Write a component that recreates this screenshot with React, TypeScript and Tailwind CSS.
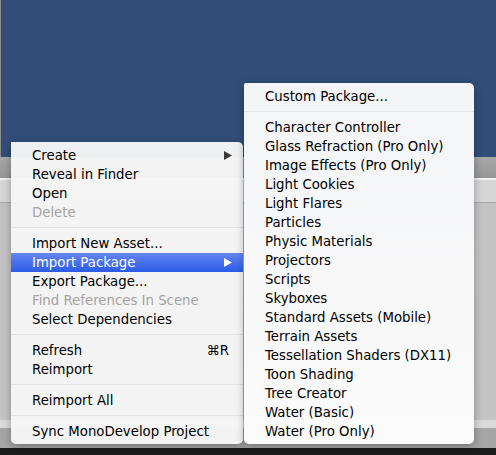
import React from 'react';

type Item = { label: string; disabled?: boolean; arrow?: boolean; shortcut?: string; active?: boolean } | 'sep';

const mainItems: Item[] = [
  { label: 'Create', arrow: true },
  { label: 'Reveal in Finder' },
  { label: 'Open' },
  { label: 'Delete', disabled: true },
  'sep',
  { label: 'Import New Asset...' },
  { label: 'Import Package', arrow: true, active: true },
  { label: 'Export Package...' },
  { label: 'Find References In Scene', disabled: true },
  { label: 'Select Dependencies' },
  'sep',
  { label: 'Refresh', shortcut: '⌘R' },
  { label: 'Reimport' },
  'sep',
  { label: 'Reimport All' },
  'sep',
  { label: 'Sync MonoDevelop Project' },
];

const packageItems: Item[] = [
  { label: 'Custom Package...' },
  'sep',
  { label: 'Character Controller' },
  { label: 'Glass Refraction (Pro Only)' },
  { label: 'Image Effects (Pro Only)' },
  { label: 'Light Cookies' },
  { label: 'Light Flares' },
  { label: 'Particles' },
  { label: 'Physic Materials' },
  { label: 'Projectors' },
  { label: 'Scripts' },
  { label: 'Skyboxes' },
  { label: 'Standard Assets (Mobile)' },
  { label: 'Terrain Assets' },
  { label: 'Tessellation Shaders (DX11)' },
  { label: 'Toon Shading' },
  { label: 'Tree Creator' },
  { label: 'Water (Basic)' },
  { label: 'Water (Pro Only)' },
];

function Arrow({ white }: { white?: boolean }) {
  return (
    <svg width="8" height="9" viewBox="0 0 8 9" className="shrink-0 -mt-px">
      <path d="M0 0 L8 4.5 L0 9 Z" fill={white ? '#ffffff' : '#3a3a3a'} />
    </svg>
  );
}

function MenuList({ items }: { items: Item[] }) {
  return (
    <div className="flex flex-col py-[3.5px]">
      {items.map((it, i) =>
        it === 'sep' ? (
          <div key={i} className="h-[12px] flex items-center">
            <div className="h-px w-full bg-[#e2e2e2]" />
          </div>
        ) : (
          <div
            key={i}
            className={`h-[19px] flex items-center pl-[21px] pr-[11px] pt-px leading-none ${
              it.active
                ? 'bg-gradient-to-b from-[#6585f1] to-[#2a5be8] text-white'
                : it.disabled
                ? 'text-[#a3a3a3]'
                : 'text-black'
            }`}
          >
            <span className="flex-1 whitespace-nowrap">{it.label}</span>
            {it.shortcut && <span className="mr-[3px]">{it.shortcut}</span>}
            {it.arrow && <Arrow white={it.active} />}
          </div>
        )
      )}
    </div>
  );
}

export default function App() {
  return (
    <div className="relative w-[496px] h-[455px] overflow-hidden bg-[#c2c2c2] font-['DejaVu_Sans',sans-serif] text-[13.3px]">
      {/* editor backdrop */}
      <div className="flex flex-col h-full">
        <div className="h-[157px] bg-[#314d78] border-l border-[#8a8a8a]" />
        <div className="h-[21px] bg-gradient-to-b from-[#a8a8a8] to-[#969696]" />
        <div className="h-[2px] bg-[#f2f2f2]" />
        <div className="h-[23px] bg-[#d6d6d6] border-b border-[#a9a9a9]" />
        <div className="flex-1 bg-[#c3c3c3]" />
        <div className="h-[8px] bg-[#dadada]" />
        <div className="h-[20px] bg-[#a6a6a6]" />
        <div className="h-[7px] bg-[#1c1c1c]" />
      </div>

      {/* context menu */}
      <div className="absolute left-[11px] top-[142px] w-[232px] h-[302px] bg-[#f6f6f6]/[0.97] rounded-b-[5px] rounded-tr-[5px] shadow-[0_3px_9px_rgba(0,0,0,0.3)]">
        <MenuList items={mainItems} />
      </div>

      {/* import package submenu */}
      <div className="absolute left-[244px] top-[83px] w-[230px] h-[361px] bg-gradient-to-b from-[#f4f5f7] to-[#fbfbfb] rounded-b-[5px] rounded-tr-[5px] rounded-tl-[2px] shadow-[0_3px_9px_rgba(0,0,0,0.3)]">
        <MenuList items={packageItems} />
      </div>
    </div>
  );
}
